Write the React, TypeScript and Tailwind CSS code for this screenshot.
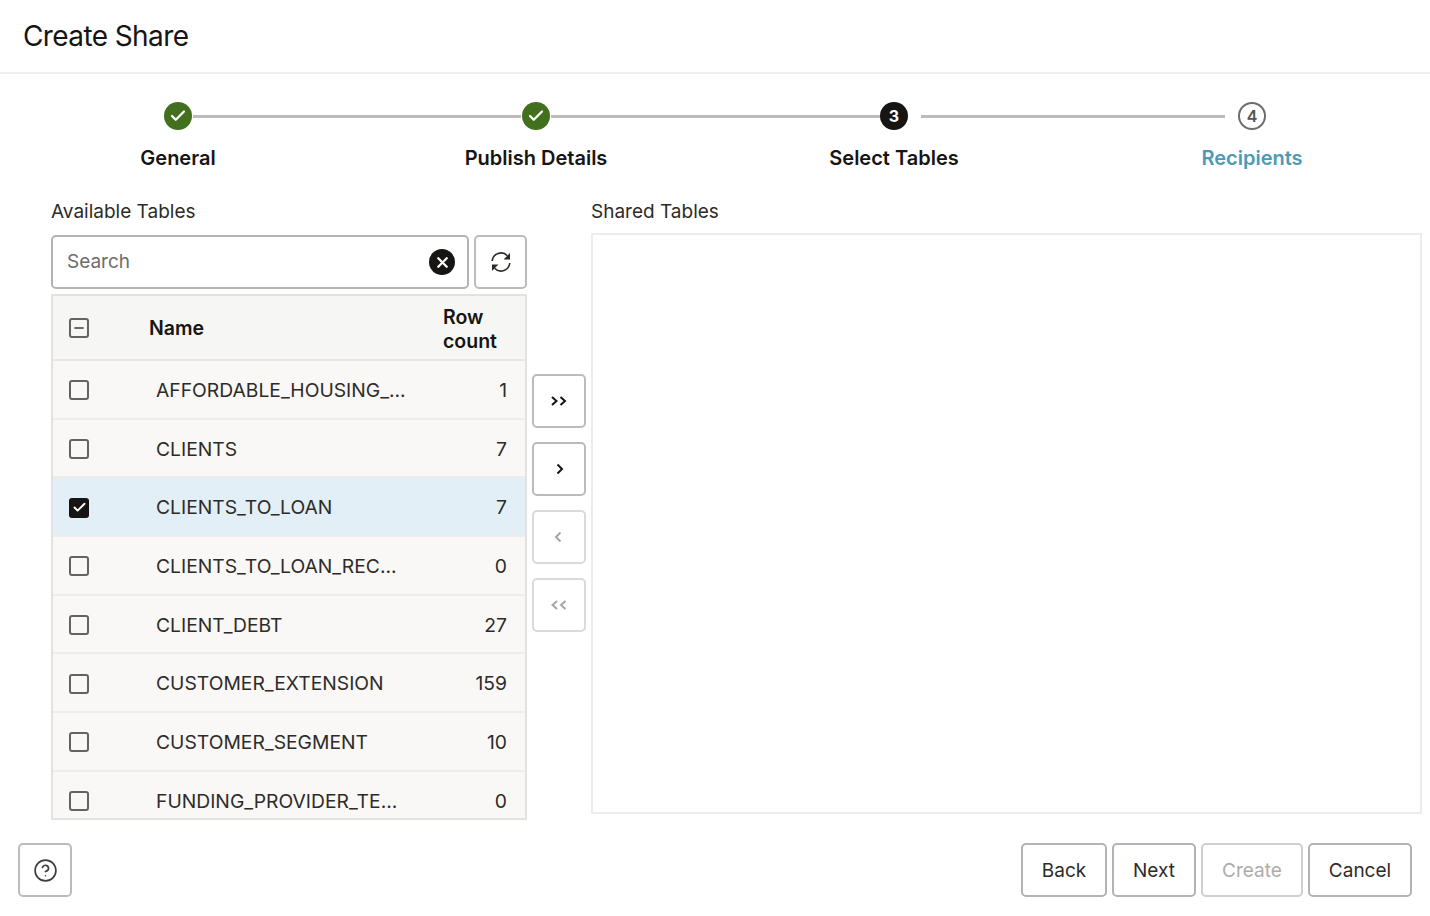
import { Check, CircleHelp, Minus, X } from "lucide-react";

const rows = [
  { name: "AFFORDABLE_HOUSING_...", count: "1" },
  { name: "CLIENTS", count: "7" },
  { name: "CLIENTS_TO_LOAN", count: "7", selected: true },
  { name: "CLIENTS_TO_LOAN_REC...", count: "0" },
  { name: "CLIENT_DEBT", count: "27" },
  { name: "CUSTOMER_EXTENSION", count: "159" },
  { name: "CUSTOMER_SEGMENT", count: "10" },
  { name: "FUNDING_PROVIDER_TE...", count: "0" },
];

// half of a connector; the wrapper keeps the circles centred in their column
function Line({ className = "" }: { className?: string }) {
  return (
    <div className="flex-1">
      <div className={`h-[3px] bg-[#bdbbb9] ${className}`} />
    </div>
  );
}

function Stepper() {
  return (
    <div className="ml-[-1px] mt-[28px] flex w-[1432px]">
      <div className="flex w-[358px] flex-col items-center">
        <div className="flex w-full items-center">
          <div className="flex-1" />
          <div className="flex h-[28px] w-[28px] items-center justify-center rounded-full bg-[#42701f] text-white">
            <Check size={18} strokeWidth={3} />
          </div>
          <Line className="ml-px" />
        </div>
        <span className="mt-[16px] text-[20px] leading-[24px] font-semibold text-[#161513]">General</span>
      </div>
      <div className="flex w-[358px] flex-col items-center">
        <div className="flex w-full items-center">
          <Line className="mr-px" />
          <div className="flex h-[28px] w-[28px] items-center justify-center rounded-full bg-[#42701f] text-white">
            <Check size={18} strokeWidth={3} />
          </div>
          <Line className="ml-px" />
        </div>
        <span className="mt-[16px] text-[20px] leading-[24px] font-semibold text-[#161513]">Publish Details</span>
      </div>
      <div className="flex w-[358px] flex-col items-center">
        <div className="flex w-full items-center">
          <Line />
          <div className="flex h-[28px] w-[28px] items-center justify-center rounded-full bg-[#161513] text-[16px] font-bold text-white">
            3
          </div>
          <Line className="ml-[13px]" />
        </div>
        <span className="mt-[16px] text-[20px] leading-[24px] font-semibold text-[#161513]">Select Tables</span>
      </div>
      <div className="flex w-[358px] flex-col items-center">
        <div className="flex w-full items-center">
          <Line className="mr-[13px]" />
          <div className="flex h-[28px] w-[28px] items-center justify-center rounded-full border-2 border-[#6f6d6b] text-[16px] font-semibold text-[#55534f]">
            4
          </div>
          <div className="flex-1" />
        </div>
        <span className="mt-[16px] text-[20px] leading-[24px] font-semibold text-[#4c9ab5]">Recipients</span>
      </div>
    </div>
  );
}

function Box({ checked, dash }: { checked?: boolean; dash?: boolean }) {
  if (checked) {
    return (
      <div className="flex h-[20px] w-[20px] items-center justify-center rounded-[3px] bg-[#161513] text-white">
        <Check size={15} strokeWidth={3} />
      </div>
    );
  }
  return (
    <div className="flex h-[20px] w-[20px] items-center justify-center rounded-[3px] border-2 border-[#65635f] text-[#3f3d3a]">
      {dash && <Minus size={14} strokeWidth={2.5} />}
    </div>
  );
}

function TableList() {
  return (
    <div className="mt-[5px] h-[526px] overflow-hidden border-2 border-[#e4e2e0] bg-[#f9f8f6]">
      <div className="flex h-[65px] items-center border-b-2 border-[#e9e7e5] bg-[#f6f6f5]">
        <div className="w-[96px] pl-[16px]">
          <Box dash />
        </div>
        <span className="flex-1 pt-[2px] text-[19.5px] font-semibold text-[#161513]">Name</span>
        <span className="w-[82px] pt-[2px] text-[19.5px] leading-[24px] font-semibold text-[#161513]">
          Row
          <br />
          count
        </span>
      </div>
      {rows.map((row) => (
        <div
          key={row.name}
          className={`flex h-[58.7px] shrink-0 items-center border-b-2 border-[#eeecea] pt-[2px] text-[19.3px] text-[#2d2b28] ${
            row.selected ? "bg-[#e2eff6]" : ""
          }`}
        >
          <div className="w-[96px] pl-[16px]">
            <Box checked={row.selected} />
          </div>
          <span className="ml-[7px] flex-1">{row.name}</span>
          <span className="pr-[18px]">{row.count}</span>
        </div>
      ))}
    </div>
  );
}

function Chevrons({ points }: { points: string[] }) {
  return (
    <svg width="20" height="12" viewBox="0 0 20 12" fill="none" stroke="currentColor" strokeWidth="2">
      {points.map((p) => (
        <polyline key={p} points={p} />
      ))}
    </svg>
  );
}

function RefreshIcon() {
  return (
    <svg width="24" height="24" viewBox="0 0 24 24" fill="none" stroke="currentColor" strokeWidth="1.6">
      <path d="M3.2 11 A8.8 8.8 0 0 1 18.4 5.8" />
      <path d="M20.8 13 A8.8 8.8 0 0 1 5.6 18.2" />
      <polygon points="21,3 21,9.4 14.6,9.4" fill="currentColor" stroke="none" />
      <polygon points="3,21 3,14.6 9.4,14.6" fill="currentColor" stroke="none" />
    </svg>
  );
}

function MoveButton({ children, disabled }: { children: React.ReactNode; disabled?: boolean }) {
  return (
    <button
      className={`flex h-[54px] w-[54px] items-center justify-center rounded-[5px] border-2 ${
        disabled ? "border-[#dcdad8] text-[#a8a6a3]" : "border-[#bdbbb9] text-[#161513]"
      }`}
    >
      {children}
    </button>
  );
}

function FooterButton({ label, width, disabled }: { label: string; width: string; disabled?: boolean }) {
  return (
    <button
      className={`h-[54px] rounded-[5px] border-2 pt-[3px] text-[19px] ${width} ${
        disabled ? "border-[#d0cecc] text-[#aeacaa]" : "border-[#b5b3b1] text-[#2d2b28]"
      }`}
    >
      {label}
    </button>
  );
}

export default function App() {
  return (
    <div className="flex h-[916px] w-[1430px] flex-col overflow-hidden bg-white font-['Inter',sans-serif] text-[#161513]">
      <div className="flex h-[74px] shrink-0 items-center border-b-2 border-[#eeeeee] pl-[23px]">
        <h1 className="text-[28px] font-normal tracking-[-0.6px]">Create Share</h1>
      </div>
      <Stepper />
      <div className="mt-[30px] flex pl-[51px]">
        <div className="w-[476px]">
          <div className="text-[19px] leading-[24px] text-[#2d2b28]">Available Tables</div>
          <div className="mt-[11px] flex gap-[5px]">
            <div className="flex h-[54px] w-[418px] items-center rounded-[5px] border-2 border-[#b5b3b1] pr-[12px] pl-[14px]">
              <span className="flex-1 pt-[1px] text-[19px] text-[#6f6d6b]">Search</span>
              <div className="flex h-[26px] w-[26px] items-center justify-center rounded-full bg-[#161513] text-white">
                <X size={17} strokeWidth={3.2} />
              </div>
            </div>
            <button className="flex h-[54px] w-[53px] items-center justify-center rounded-[5px] border-2 border-[#bdbbb9] text-[#2d2b28]">
              <RefreshIcon />
            </button>
          </div>
          <TableList />
        </div>
        <div className="mt-[174px] ml-[5px] flex w-[54px] flex-col gap-[14px]">
          <MoveButton>
            <Chevrons points={["3,2 7.5,6 3,10", "11.5,2 16,6 11.5,10"]} />
          </MoveButton>
          <MoveButton>
            <Chevrons points={["8.5,1.5 13,6 8.5,10.5"]} />
          </MoveButton>
          <MoveButton disabled>
            <Chevrons points={["11.5,1.5 7,6 11.5,10.5"]} />
          </MoveButton>
          <MoveButton disabled>
            <Chevrons points={["8,2 3.5,6 8,10", "16.5,2 12,6 16.5,10"]} />
          </MoveButton>
        </div>
        <div className="ml-[5px] w-[831px]">
          <div className="text-[19px] leading-[24px] text-[#2d2b28]">Shared Tables</div>
          <div className="mt-[9px] h-[581px] border-2 border-[#eeecea]" />
        </div>
      </div>
      <div className="mt-[23px] flex items-center pr-[18px] pl-[18px]">
        <button className="flex h-[54px] w-[54px] items-center justify-center rounded-[5px] border-2 border-[#bdbbb9] text-[#3f3d3a]">
          <CircleHelp size={25} strokeWidth={1.6} />
        </button>
        <div className="ml-auto flex gap-[5px]">
          <FooterButton label="Back" width="w-[86px]" />
          <FooterButton label="Next" width="w-[84px]" />
          <FooterButton label="Create" width="w-[102px]" disabled />
          <FooterButton label="Cancel" width="w-[104px]" />
        </div>
      </div>
    </div>
  );
}
